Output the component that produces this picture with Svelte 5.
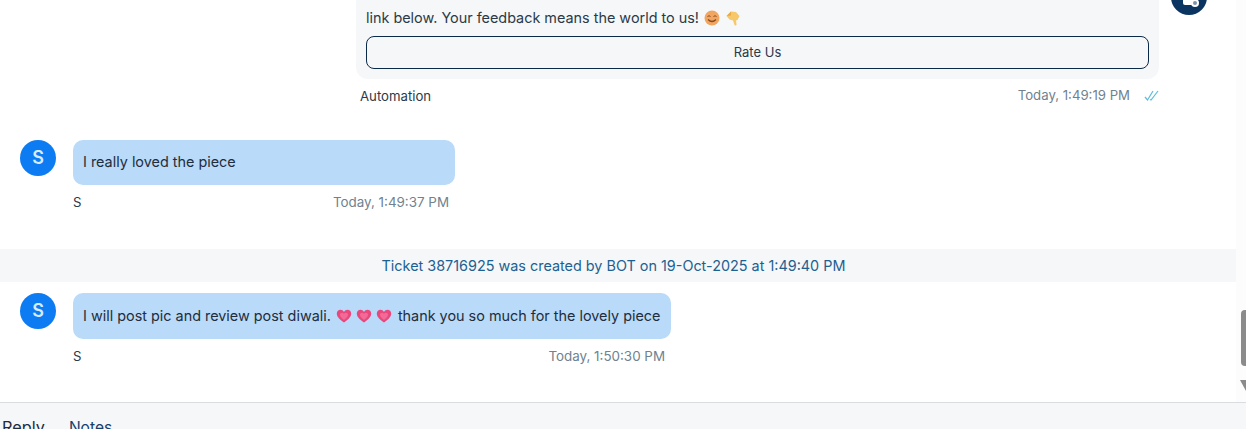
<script lang="ts">
  const msgs = [
    { id: 1, time: 'Today, 1:49:37 PM', width: 382, height: 45 },
    { id: 2, time: 'Today, 1:50:30 PM', width: 598, height: 46 },
  ];
</script>

{#snippet heart()}
  <svg class="emoji" width="16" height="16" viewBox="0 0 16 16">
    <path d="M8 14.500C3 11 .8 8.400.8 5.500.8 3.300 2.500 1.800 4.400 1.800c1.500 0 2.800.8 3.600 2.200.8-1.400 2.100-2.200 3.600-2.200 1.900 0 3.600 1.500 3.600 3.700 0 2.900-2.200 5.500-7.200 9z" fill="#e8487c" />
    <path d="M8 12C5.500 10 4 8.400 4 6.800 4 5.600 5 4.800 6 4.800c.9 0 1.600.5 2 1.300.4-.8 1.100-1.300 2-1.300 1 0 2 .8 2 2 0 1.600-1.500 3.200-4 5.200z" fill="#f26a96" />
  </svg>
{/snippet}

<div class="page">
  <div class="thread">
    <div class="bot-row">
      <div class="bot-msg">
        <div class="card">
          <p class="card-text">
            <span>link below. Your feedback means the world to us!</span>
            <svg class="emoji" width="16" height="16" viewBox="0 0 16 16">
              <circle cx="8" cy="8" r="7.500" fill="#f0a560" />
              <path d="M3.500 6.500q1.500-1.500 3 0M9.500 6.500q1.500-1.500 3 0" stroke="#8a4a20" fill="none" />
              <path d="M4 9.500q4 4 8 0" stroke="#8a4a20" stroke-width="1.200" fill="none" />
            </svg>
            <svg class="emoji" width="16" height="16" viewBox="0 0 16 16">
              <path d="M1.500 6 6 1.500l5 .5 3.500 4-2 4-1.500.5.500 4c0 1.300-2 1.300-2.200 0L8 10.500 4.500 9.500z" fill="#f6c86a" />
              <path d="M1.500 6 6 1.500 6 5.500z" fill="#e8a948" />
            </svg>
          </p>
          <button class="rate">Rate Us</button>
        </div>
        <div class="meta bot-meta">
          <span class="name">Automation</span>
          <span class="right">
            <span class="time">Today, 1:49:19 PM</span>
            <svg class="ticks" width="15" height="11" viewBox="0 0 15 11" fill="none" stroke="#5fbcdc" stroke-width="1.200">
              <path d="M1 7l2.500 3L9 1" />
              <path d="M6 9.500l1 .5L14 1" />
            </svg>
          </span>
        </div>
      </div>
      <div class="agent">
        <svg width="36" height="36" viewBox="0 0 36 36">
          <circle cx="18" cy="18" r="18" fill="#0b3460" />
          <rect x="12" y="12" width="10" height="14" rx="2" fill="#fff" />
          <circle cx="24" cy="24" r="4" fill="#fff" />
          <circle cx="24" cy="24" r="2" fill="#7d93aa" />
        </svg>
      </div>
    </div>

    <div class="msg first">
      <div class="avatar">S</div>
      <div class="body" style="width: {msgs[0].width}px">
        <div class="bubble" style="height: {msgs[0].height}px">I really loved the piece</div>
        <div class="meta">
          <span class="name">S</span>
          <span class="time">{msgs[0].time}</span>
        </div>
      </div>
    </div>

    <div class="banner">Ticket 38716925 was created by BOT on 19-Oct-2025 at 1:49:40 PM</div>

    <div class="msg">
      <div class="avatar">S</div>
      <div class="body" style="width: {msgs[1].width}px">
        <div class="bubble" style="height: {msgs[1].height}px">
          <span>I will post pic and review post diwali.</span>
          <span class="hearts">{@render heart()}{@render heart()}{@render heart()}</span>
          <span>thank you so much for the lovely piece</span>
        </div>
        <div class="meta">
          <span class="name">S</span>
          <span class="time">{msgs[1].time}</span>
        </div>
      </div>
    </div>
  </div>

  <div class="tabs">
    <span class="tab">Reply</span>
    <span class="tab notes">Notes</span>
  </div>

  <div class="scrollbar">
    <div class="thumb"></div>
    <div class="arrow"></div>
  </div>
</div>

<style>
  :global(body) {
    margin: 0;
    background: #fff;
  }

  .page {
    position: relative;
    height: 429px;
    overflow: hidden;
    display: flex;
    flex-direction: column;
    font-family: Inter, 'Liberation Sans', sans-serif;
    font-size: 14.4px;
    color: #1f2d3d;
  }

  .thread {
    height: 402px;
    padding-right: 10px;
    box-sizing: border-box;
    flex: none;
  }

  .bot-row {
    display: flex;
    padding-left: 356px;
    gap: 12px;
  }

  .bot-msg {
    width: 803px;
  }

  .card {
    height: 79px;
    box-sizing: border-box;
    padding: 9px 10px 0;
    background: #f5f7f9;
    border-radius: 0 0 12px 12px;
  }

  .card-text {
    display: flex;
    align-items: center;
    gap: 5px;
    margin: 0;
    height: 18px;
    margin-bottom: 9px;
    line-height: 18px;
    color: #2b3a48;
  }

  .emoji {
    flex: none;
  }

  .rate {
    display: block;
    width: 100%;
    height: 33px;
    padding: 0 0 2px;
    background: #f5f7f9;
    border: 1px solid #0b2a4a;
    border-radius: 8px;
    font: inherit;
    font-size: 13px;
    color: #2b3a48;
  }

  .meta {
    display: flex;
    justify-content: space-between;
    align-items: center;
    height: 18px;
    margin-top: 8px;
    padding-right: 6px;
    font-size: 13.400px;
  }

  .bot-meta {
    margin-top: 8px;
    padding: 0 0 0 4px;
  }

  .name {
    color: #2b3a48;
    font-size: 13.200px;
  }

  .right {
    display: flex;
    align-items: center;
    gap: 14px;
    margin-top: -2px;
    font-size: 13.200px;
  }

  .time {
    color: #6f8290;
  }

  .agent {
    margin-top: -21px;
    height: 36px;
  }

  .msg {
    display: flex;
    gap: 17px;
    padding-left: 20px;
    margin-top: 11px;
  }

  .msg.first {
    margin-top: 35px;
  }

  .avatar {
    width: 36px;
    height: 36px;
    box-sizing: border-box;
    padding-bottom: 2px;
    border-radius: 50%;
    background: #0d7bf2;
    color: #d8ecff;
    font-size: 18px;
    font-weight: 600;
    display: flex;
    align-items: center;
    justify-content: center;
    flex: none;
  }

  .body {
    flex: none;
  }

  .bubble {
    display: flex;
    align-items: center;
    gap: 5px;
    box-sizing: border-box;
    padding: 0 10px 2px;
    background: #b9daf9;
    border-radius: 10px;
    color: #1f2d3d;
    white-space: nowrap;
  }

  .hearts {
    display: inline-flex;
    gap: 4px;
    margin: 2px 1px 0 0;
  }

  .banner {
    margin-top: 38px;
    height: 33px;
    line-height: 33px;
    padding-right: 9px;
    background: #f5f7f9;
    color: #1d6191;
    text-align: center;
  }

  .tabs {
    flex: 1;
    display: flex;
    gap: 24px;
    padding: 14px 0 0 2px;
    background: #f5f7f9;
    border-top: 1px solid #d9dde1;
    font-size: 16.300px;
    line-height: 20px;
    color: #1f2d3d;
  }

  .notes {
    margin-top: 1px;
    font-size: 15.600px;
    color: #163f6b;
  }

  .scrollbar {
    position: absolute;
    right: 0;
    top: 0;
    width: 10px;
    height: 402px;
    background: #fcfcfc;
  }

  .thumb {
    position: absolute;
    left: 5px;
    top: 310px;
    width: 6px;
    height: 56px;
    border-radius: 4px 0 0 4px;
    background: #8b8b8b;
  }

  .arrow {
    position: absolute;
    left: 4px;
    top: 380px;
    border-left: 6px solid transparent;
    border-right: 6px solid transparent;
    border-top: 11px solid #8b8b8b;
  }
</style>
